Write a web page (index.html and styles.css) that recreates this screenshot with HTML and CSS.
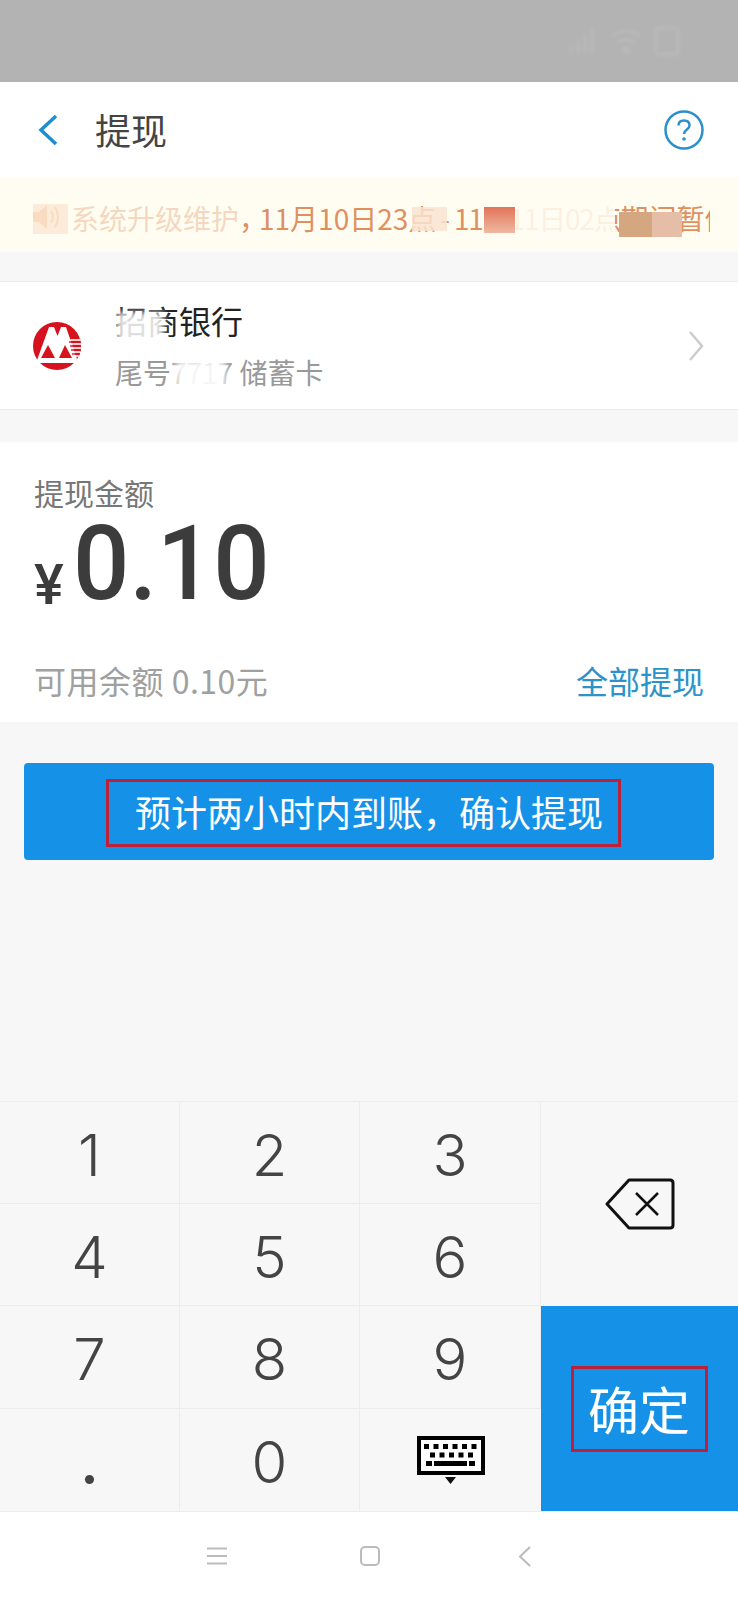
FILE: index.html
```html
<!DOCTYPE html>
<html>
	<head>
		<meta charset="utf-8">
		<title>提现</title>
		<link rel="stylesheet" href="styles.css">
	</head>
	<body>
		<div class="phone">
			<div class="status">
				<svg class="status-icons" width="116" height="50" viewBox="0 0 116 50">
					<g fill="none" stroke="#bdbdbd" stroke-width="3">
						<path d="M3 38v-8M10 38v-14M17 38v-20M24 38v-26"/>
						<path d="M44 20q14-10 28 0M49 27q9-7 18 0"/>
						<rect x="88" y="12" width="22" height="26"/>
					</g>
					<circle cx="58" cy="34" r="4" fill="#bdbdbd"/>
				</svg>
			</div>

			<div class="header">
				<svg class="back" width="22" height="32" viewBox="0 0 22 32">
					<path d="M19 2L4 16l15 14" fill="none" stroke="#1b8fd2" stroke-width="3.5"/>
				</svg>
				<div class="title">提现</div>
				<svg class="help" width="42" height="42" viewBox="0 0 42 42">
					<circle cx="21" cy="21" r="18.500" fill="none" stroke="#2a8fcb" stroke-width="2.500"/>
					<path d="M15.500 16.500c0-3.500 2.500-5 5.500-5s5.500 1.500 5.500 5c0 4-5.500 4-5.500 8.500" fill="none" stroke="#2a8fcb" stroke-width="2.500"/>
					<circle cx="21" cy="30" r="1.800" fill="#2a8fcb"/>
				</svg>
			</div>

			<div class="notice">
				<svg class="speaker" width="28" height="30" viewBox="0 0 28 30">
					<path d="M2 10h6l8-7v24l-8-7H2z" fill="#f3c9a4"/>
					<path d="M20 9q4 6 0 12M24 5q6 10 0 20" fill="none" stroke="#f3c9a4" stroke-width="2"/>
				</svg>
				<div class="notice-text">系统升级维护<span class="notice-comma">，</span>11月10日23点<span class="notice-dash">-</span><span class="notice-tight">11月11日02点</span>期间暂停提现</div>
				<div class="smear smear-a"></div>
				<div class="smear smear-b"></div>
				<div class="smear smear-c"></div>
				<div class="smear smear-d"></div>
				<div class="smear smear-e"></div>
				<div class="smear smear-f"></div>
				<div class="smear smear-g"></div>
			</div>

			<div class="bank">
				<svg class="bank-logo" width="48" height="48" viewBox="0 0 48 48">
					<circle cx="24" cy="24" r="24" fill="#d5121e"/>
					<path d="M36 17h12v2H36zM37 21h11v2H37zM38 25h10v2H38zM39 29h8v2h-8zM40 33h6v2h-6z" fill="#f6cfcf"/>
					<path d="M3 41L16 5h5l3.500 9L28 5h5l11 32-1 4z" fill="#fff"/>
					<path d="M8 36l7-13 7 13zM26 36l6-13 7 13z" fill="#d5121e"/>
					<path d="M36 19h12v2H36zM37 23h11v2H37zM38 27h10v2H38zM39 31h8v2h-8z" fill="#d5121e" opacity=".7"/>
				</svg>
				<div class="bank-info">
					<div class="bank-name">招商银行</div>
					<div class="bank-card">尾号7717 储蓄卡</div>
				</div>
				<svg class="more" width="16" height="30" viewBox="0 0 16 30">
					<path d="M2 1l12 14L2 29" fill="none" stroke="#cccccc" stroke-width="2.500"/>
				</svg>
				<div class="wipe wipe-name"></div>
				<div class="wipe wipe-card"></div>
			</div>

			<div class="amount">
				<div class="amount-label">提现金额</div>
				<div class="amount-value">
					<span class="yen">¥</span><span class="money">0.10</span>
				</div>
				<div class="balance">
					<span class="balance-text">可用余额 0.10元</span>
					<span class="balance-all">全部提现</span>
				</div>
			</div>

			<div class="main">
				<div class="submit">
					<span class="submit-text">预计两小时内到账，确认提现</span>
				</div>
			</div>

			<div class="keypad">
				<div class="key">1</div>
				<div class="key">2</div>
				<div class="key">3</div>
				<div class="key key-del">
					<svg width="70" height="52" viewBox="0 0 70 52">
						<path d="M24 2h41q3 0 3 3v42q0 3-3 3H24L2 26z" fill="none" stroke="#111" stroke-width="3" stroke-linejoin="round"/>
						<path d="M31 15l22 22M53 15L31 37" fill="none" stroke="#111" stroke-width="2.500"/>
					</svg>
				</div>
				<div class="key">4</div>
				<div class="key">5</div>
				<div class="key">6</div>
				<div class="key">7</div>
				<div class="key">8</div>
				<div class="key">9</div>
				<div class="key-ok">
					<span class="key-ok-text">确定</span>
				</div>
				<div class="key key-dot">.</div>
				<div class="key">0</div>
				<div class="key key-hide">
					<svg width="68" height="48" viewBox="0 0 68 48">
						<rect x="2" y="2" width="64" height="35" fill="#fff" stroke="#000" stroke-width="4"/>
						<path d="M7 8h5v5H7zM16.500 8h5v5h-5zM26 8h5v5h-5zM35.500 8h5v5h-5zM45 8h5v5h-5zM54.500 8h5v5h-5zM13 16.500h5v5h-5zM22.500 16.500h5v5h-5zM32 16.500h5v5h-5zM41.500 16.500h5v5h-5zM51 16.500h5v5h-5zM9 25h6v5H9zM17 25h33v5H17zM52 25h6v5h-6z" fill="#000"/>
						<path d="M28 41h11l-5.500 7z" fill="#111"/>
					</svg>
				</div>
			</div>

			<div class="navbar">
				<svg width="20" height="18" viewBox="0 0 20 18">
					<path d="M0 1.500h20M0 9h20M0 16.500h20" stroke="#bbbbbb" stroke-width="2"/>
				</svg>
				<svg width="20" height="20" viewBox="0 0 20 20">
					<rect x="1" y="1" width="18" height="18" rx="4" fill="none" stroke="#bbbbbb" stroke-width="2"/>
				</svg>
				<svg class="nav-back" width="13" height="21" viewBox="0 0 13 21">
					<path d="M12 1L2 10.500l10 9.500" fill="none" stroke="#bbbbbb" stroke-width="2"/>
				</svg>
			</div>
		</div>
	</body>
</html>
```

FILE: styles.css
```css
body {padding: 0; margin: 0; border: 0; font-family: "Noto Sans CJK SC", "Noto Sans", sans-serif;}
.phone {display: flex; flex-direction: column; width: 738px; height: 1600px; overflow: hidden; background-color: #f7f7f7;}

.status {display: flex; justify-content: flex-end; align-items: center; height: 82px; padding-right: 54px; box-sizing: border-box; background-color: #b3b3b3;}
.status-icons {filter: blur(1.5px); opacity: .6;}

.header {display: flex; align-items: center; height: 96px; padding: 0 33px 0 37px; background-color: #fff;}
.title {flex: 1; margin: -2px 0 0 36px; font-size: 36px; line-height: 44px; color: #444;}

.notice {position: relative; display: flex; align-items: center; height: 74px; padding-left: 31px; background-color: #fffdf1;}
.speaker {margin-top: 4px;}
.notice-text {width: 639px; margin: 6px 0 0 12px; overflow: hidden; white-space: nowrap; font-size: 28px; line-height: 40px; color: #e08f5f;}
.notice-comma {letter-spacing: -8px;}
.notice-dash {margin: 0 4px;}
.notice-tight {letter-spacing: -1.2px;}

/* blurred patches over the notice */
.smear {position: absolute;}
.smear-a {left: 33px; top: 26px; width: 35px; height: 30px; background-color: #fbe2cf; opacity: .7;}
.smear-b {left: 70px; top: 24px; width: 170px; height: 38px; background-color: #fffdf1; opacity: .65;}
.smear-c {left: 412px; top: 29px; width: 35px; height: 24px; background-color: #f9e3d0; opacity: .85;}
.smear-d {left: 484px; top: 29px; width: 31px; height: 26px; background: linear-gradient(#e2745a, #efb9a0);}
.smear-e {left: 515px; top: 26px; width: 100px; height: 32px; background-color: #fffdf3; opacity: .88;}
.smear-f {left: 619px; top: 34px; width: 33px; height: 25px; background-color: #d4a781;}
.smear-g {left: 652px; top: 34px; width: 30px; height: 25px; background-color: #e6bda6;}

.bank {position: relative; display: flex; align-items: center; height: 127px; margin-top: 29px; padding: 0 34px 0 33px; background-color: #fff; border-top: 1px solid #ebebeb; border-bottom: 1px solid #ebebeb;}
.bank-info {flex: 1; margin-left: 34px;}
.bank-name {margin-top: -2px; font-size: 32px; line-height: 44px; color: #222;}
.bank-card {margin-top: 10px; font-size: 28px; line-height: 40px; color: #999;}
.wipe {position: absolute; background-color: #fff; filter: blur(3px);}
.wipe-name {left: 116px; top: 30px; width: 48px; height: 34px; opacity: .85;}
.wipe-card {left: 176px; top: 78px; width: 50px; height: 36px; opacity: .9;}

.amount {display: flex; flex-direction: column; height: 280px; margin-top: 32px; padding: 34px 34px 22px; box-sizing: border-box; background-color: #fff;}
.amount-label {font-size: 30px; line-height: 32px; color: #777;}
.amount-value {display: flex; align-items: baseline; margin-top: 2px; color: #3c3c3c;}
.yen {font-family: Roboto, sans-serif; font-weight: 500; font-size: 56px; line-height: 108px; transform: translateY(5px);}
.money {margin-left: 9px; font-family: Roboto, sans-serif; font-weight: 500; font-size: 104px; line-height: 108px; transform: scaleX(.954); transform-origin: left;}
.balance {display: flex; justify-content: space-between; margin-top: auto; font-size: 32px; line-height: 40px;}
.balance-text {color: #a0a0a0; letter-spacing: .5px;}
.balance-all {color: #2b93c9;}

.main {flex: 1; padding: 41px 24px 0;}
.submit {display: flex; height: 97px; padding: 16px 0 0 82px; box-sizing: border-box; border-radius: 4px; background-color: #1592e8;}
.submit-text {width: 515px; height: 68px; padding-left: 26px; box-sizing: border-box; border: 3px solid #bd2139; font-size: 36px; line-height: 58px; color: #fff; white-space: nowrap;}

.keypad {display: grid; grid-template-columns: 180px 180px 181px 197px; grid-template-rows: 102px 102px 103px 102px; border-top: 1px solid #ececec; border-bottom: 1px solid #ececec; background-color: #f7f7f7;}
.key {display: flex; justify-content: center; align-items: center; padding-top: 4px; box-sizing: border-box; border-right: 1px solid #ececec; border-bottom: 1px solid #ececec; font-family: Inter, Roboto, sans-serif; font-weight: 300; font-size: 58px; color: #444;}
.keypad .key:nth-child(n+12) {border-bottom: 0;}
.key-dot {font-weight: 600;}
.key-del {grid-column: 4; grid-row: 1 / span 2; padding-top: 0; border-right: 0; border-bottom: 0;}
.key-hide {padding-top: 0; border-right: 0;}
.key-ok {display: flex; justify-content: center; align-items: center; grid-column: 4; grid-row: 3 / span 2; background-color: #1592e8;}
.key-ok-text {width: 137px; height: 86px; padding-left: 14px; box-sizing: border-box; border: 3px solid #bd2139; font-size: 51px; line-height: 78px; color: #fff; white-space: nowrap;}

.navbar {display: flex; align-items: center; gap: 133px; flex: none; height: 88px; padding-left: 207px; box-sizing: border-box; background-color: #fff;}
.nav-back {margin-left: 5px;}
```
